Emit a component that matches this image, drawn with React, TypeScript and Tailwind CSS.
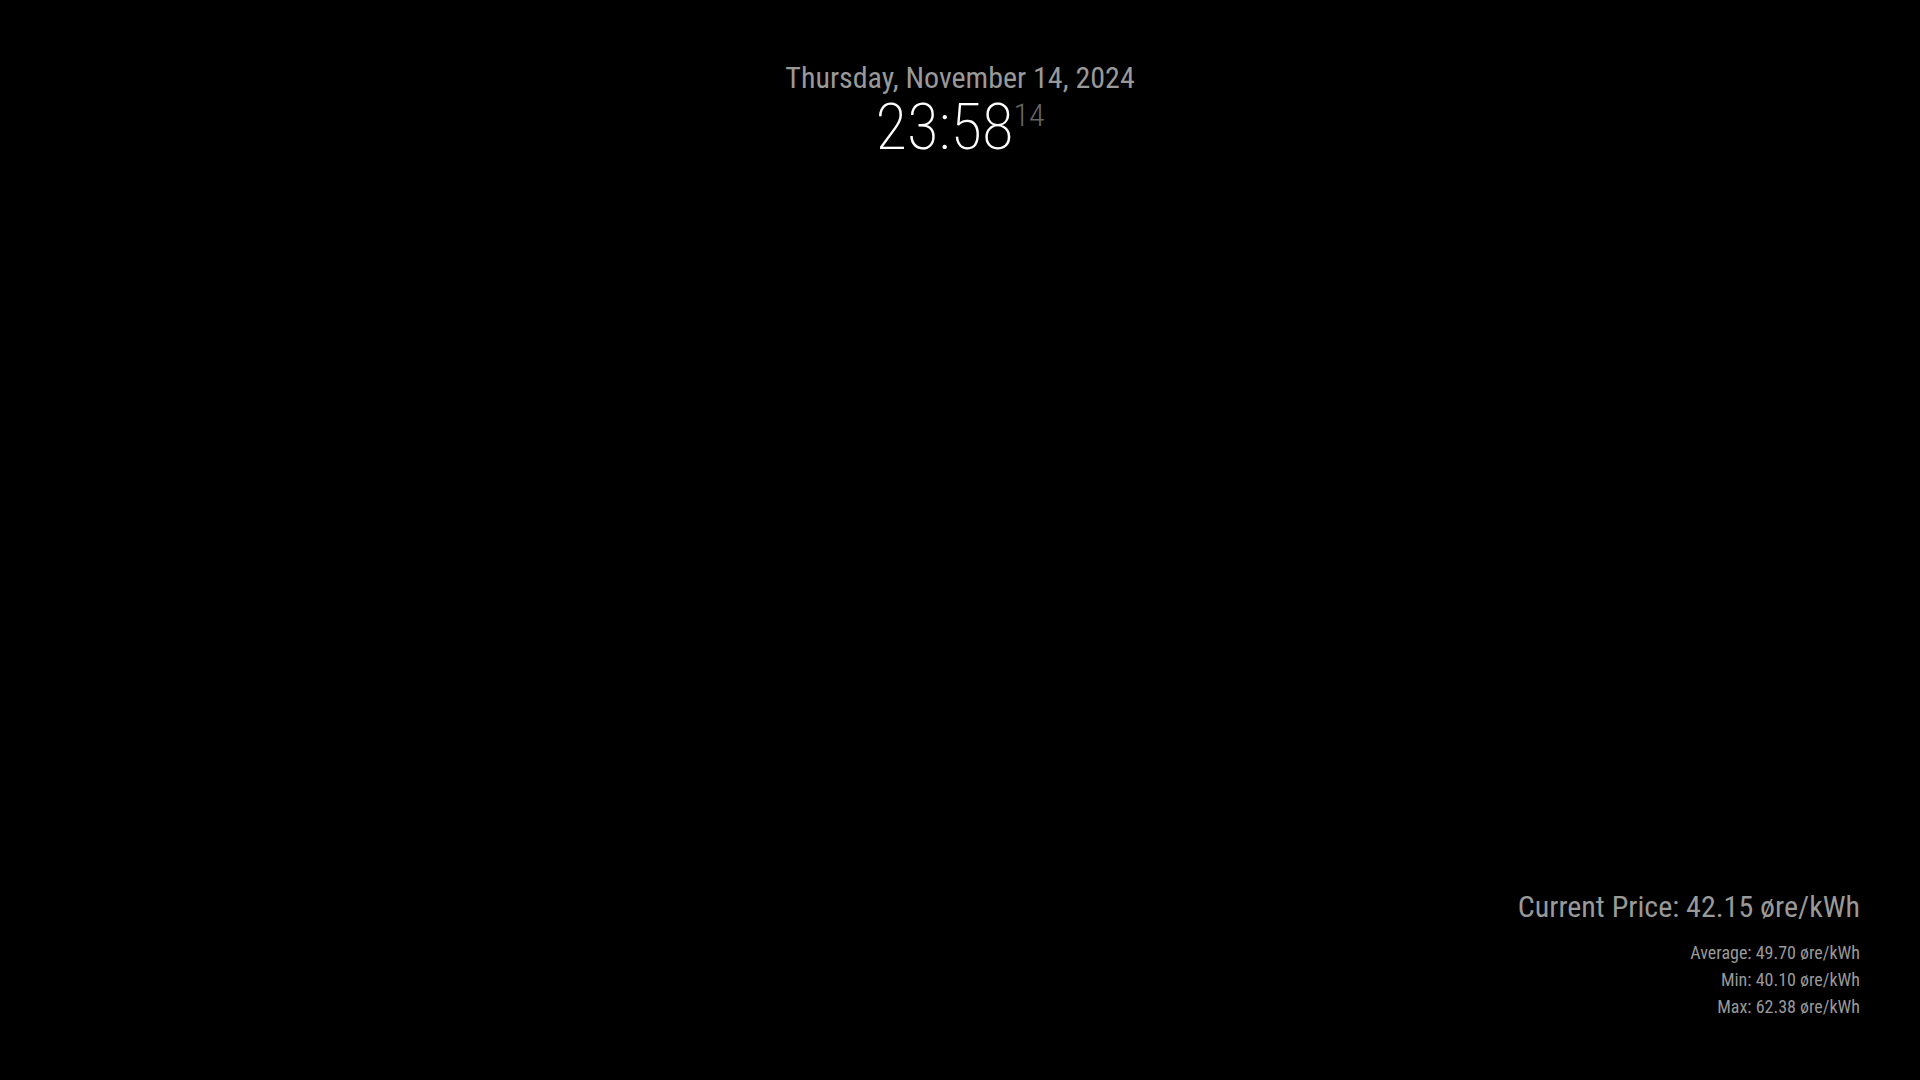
import React from 'react';

const font = { fontFamily: '"Roboto Condensed", Roboto, "Liberation Sans", sans-serif' };

export default function App() {
  return (
    <div
      className="w-[1920px] h-[1080px] bg-black text-[#999] p-[60px] flex flex-col justify-between font-stretch-condensed overflow-hidden"
      style={font}
    >
      {/* Clock */}
      <div className="flex flex-col items-center">
        <div className="text-[30px] leading-[35px]">Thursday, November 14, 2024</div>
        <div className="text-[65px] leading-[65px] font-extralight text-white">
          23:58<span className="text-[32px] align-super text-[#666] leading-none font-light">14</span>
        </div>
      </div>

      {/* Electricity price */}
      <div className="flex flex-col items-end">
        <div className="text-[30px] leading-[35px] mb-[15px]">Current Price: 42.15 øre/kWh</div>
        <div className="text-[18px] leading-[27px]">Average: 49.70 øre/kWh</div>
        <div className="text-[18px] leading-[27px]">Min: 40.10 øre/kWh</div>
        <div className="text-[18px] leading-[27px]">Max: 62.38 øre/kWh</div>
      </div>
    </div>
  );
}
